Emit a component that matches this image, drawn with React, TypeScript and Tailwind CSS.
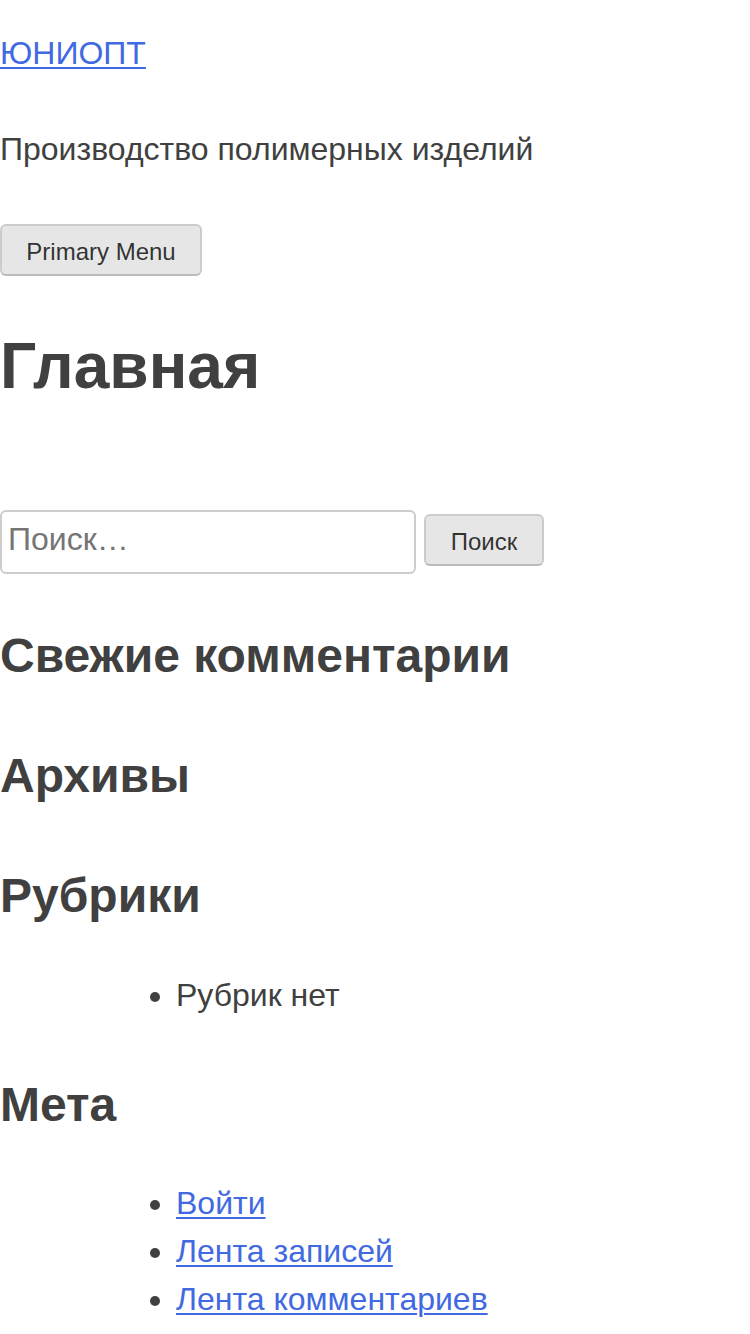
import React from "react";

export default function App() {
  const btn =
    "block h-[52px] rounded-[6px] border-2 border-solid border-[#ccc] border-b-[#bbb] bg-[#e6e6e6] pt-[3px] text-[24px] leading-[24px] text-[rgba(0,0,0,0.8)]";
  const link = "text-[#4169e1] underline decoration-[2px] underline-offset-[3px]";
  const h2 = "text-[48px] font-bold leading-[72px]";
  return (
    <div className="min-h-[1334px] bg-white pt-[29px] font-['Liberation_Sans',Arial,sans-serif] text-[32px] leading-[48px] text-[#404040]">
      <p>
        <a href="#" className={link}>
          ЮНИОПТ
        </a>
      </p>
      <p className="mt-[48px]">Производство полимерных изделий</p>
      <nav className="mt-[51px]">
        <button className={btn + " w-[202px]"}>Primary Menu</button>
      </nav>
      <h1 className="mt-[42px] text-[64px] font-bold leading-[96px]">Главная</h1>
      <form className="mt-[96px] flex items-start" onSubmit={(e) => e.preventDefault()}>
        <input
          type="search"
          placeholder="Поиск…"
          className="h-[64px] w-[416px] rounded-[6px] border-2 border-solid border-[#ccc] px-[6px] pb-[5px] text-[32px] text-[#666] outline-none placeholder:text-[#757575]"
        />
        <button className={btn + " ml-[8px] mt-[4px] w-[120px]"}>Поиск</button>
      </form>
      <h2 className={h2 + " mt-[46px]"}>Свежие комментарии</h2>
      <h2 className={h2 + " mt-[48px]"}>Архивы</h2>
      <h2 className={h2 + " mt-[48px]"}>Рубрики</h2>
      <ul className="ml-[96px] mt-[39px] list-disc pl-[80px]">
        <li>Рубрик нет</li>
      </ul>
      <h2 className={h2 + " mt-[50px]"}>Мета</h2>
      <ul className="ml-[96px] mt-[38px] list-disc pl-[80px]">
        <li>
          <a href="#" className={link}>Войти</a>
        </li>
        <li>
          <a href="#" className={link}>Лента записей</a>
        </li>
        <li>
          <a href="#" className={link}>Лента комментариев</a>
        </li>
      </ul>
    </div>
  );
}
